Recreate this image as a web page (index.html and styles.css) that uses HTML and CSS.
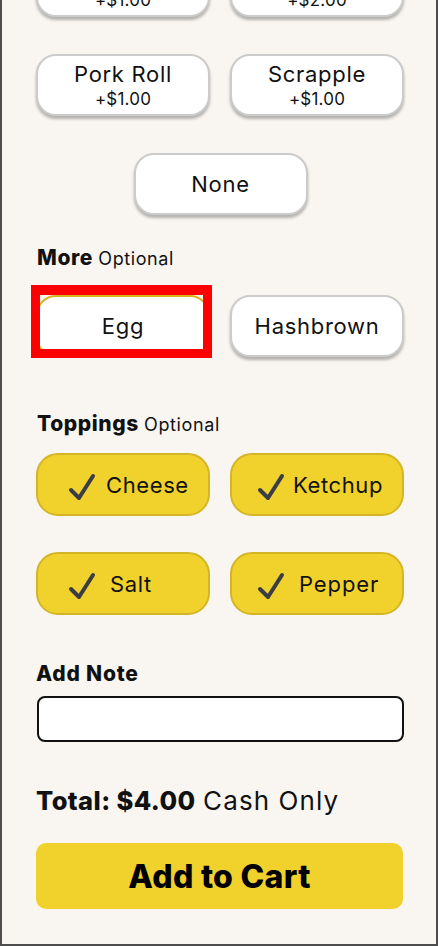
FILE: index.html
```html
<!DOCTYPE html>
<html lang="en">
<head>
<meta charset="utf-8">
<title>Order options</title>
<link rel="stylesheet" href="styles.css">
</head>
<body>
<div class="frame">
  <div class="pair pair--cut">
    <button class="opt"><span class="opt-name">Bacon</span><span class="opt-price">+$1.00</span></button>
    <button class="opt"><span class="opt-name">Sausage</span><span class="opt-price">+$2.00</span></button>
  </div>
  <div class="pair">
    <button class="opt"><span class="opt-name">Pork Roll</span><span class="opt-price">+$1.00</span></button>
    <button class="opt"><span class="opt-name">Scrapple</span><span class="opt-price">+$1.00</span></button>
  </div>
  <div class="single">
    <button class="opt"><span class="opt-name">None</span></button>
  </div>

  <h3 class="heading heading--more">More <span class="heading-opt">Optional</span></h3>
  <div class="pair">
    <div class="marked">
      <button class="opt opt--selected"><span class="opt-name">Egg</span></button>
      <span class="mark"></span>
    </div>
    <button class="opt"><span class="opt-name">Hashbrown</span></button>
  </div>

  <h3 class="heading heading--toppings">Toppings <span class="heading-opt">Optional</span></h3>
  <div class="pair">
    <button class="top"><svg class="check" viewBox="0 0 28 28"><path d="M3 17 L11 25 L25 3"/></svg><span>Cheese</span></button>
    <button class="top top--r"><svg class="check" viewBox="0 0 28 28"><path d="M3 17 L11 25 L25 3"/></svg><span>Ketchup</span></button>
  </div>
  <div class="pair pair--second">
    <button class="top"><svg class="check" viewBox="0 0 28 28"><path d="M3 17 L11 25 L25 3"/></svg><span class="top-wide">Salt</span></button>
    <button class="top top--r"><svg class="check" viewBox="0 0 28 28"><path d="M3 17 L11 25 L25 3"/></svg><span class="top-wide top-wide--r">Pepper</span></button>
  </div>

  <label class="note-label" for="note">Add Note</label>
  <input class="note" id="note" type="text">

  <p class="total"><b>Total: $4.00</b> <span class="total-note">Cash Only</span></p>
  <button class="cart">Add to Cart</button>
</div>
</body>
</html>
```
FILE: styles.css
```css
* { box-sizing: border-box; }
html, body { margin: 0; padding: 0; }
body { background: #f9f6f1; font-family: "Inter", "Liberation Sans", sans-serif; color: #111; }

.frame {
  width: 438px;
  height: 946px;
  overflow: hidden;
  background: #f9f6f1;
  border-left: 2px solid #4d4d4d;
  border-right: 2px solid #4d4d4d;
  border-bottom: 2px solid #4d4d4d;
  padding: 0 32px 0 34px;
}

.pair {
  display: grid;
  grid-template-columns: 174px 174px;
  column-gap: 20px;
  margin-top: 37px;
}
.pair--cut { margin-top: -45px; }
.pair--second { margin-top: 36px; }

.single { display: flex; justify-content: center; margin-top: 37px; padding-left: 1px; }
.single .opt { width: 174px; }

button { font-family: inherit; cursor: pointer; }

.opt {
  height: 62px;
  background: #fff;
  border: 2px solid #cbcbcb;
  border-radius: 20px;
  box-shadow: 0 3px 3px rgba(0, 0, 0, 0.28);
  display: flex;
  flex-direction: column;
  align-items: center;
  justify-content: center;
  padding: 0;
  color: #111;
}
.opt-name { font-size: 22px; line-height: 28px; letter-spacing: 0.7px; }
.opt-price { font-size: 17px; line-height: 23px; letter-spacing: 0.2px; }
.opt--selected { border-color: #d9b41e; box-shadow: none; width: 100%; }

.marked { position: relative; display: flex; }
.mark {
  position: absolute;
  left: -5px;
  top: -10px;
  width: 181px;
  height: 73px;
  border: solid #ff0000;
  border-width: 10px 9px 9px 9px;
  pointer-events: none;
}

.heading { margin: 0; font-size: 21px; line-height: 24px; font-weight: 800; padding-left: 1px; letter-spacing: 0.6px; }
.heading-opt { font-size: 18px; font-weight: 400; letter-spacing: 0.6px; }
.heading--more { margin-top: 31px; }
.heading--more + .pair { margin-top: 24px; }
.heading--toppings { margin-top: 55px; }
.heading--toppings + .pair { margin-top: 16px; }

.top {
  height: 63px;
  background: #f1d12b;
  border: 2px solid #d4b526;
  border-radius: 22px;
  display: flex;
  align-items: center;
  gap: 10px;
  padding: 0 0 0 30px;
  font-size: 22px;
  letter-spacing: 0.6px;
  color: #111;
}
.top--r { padding-left: 25px; gap: 8px; }
.top-wide { margin-left: 4px; }
.top-wide--r { margin-left: 6px; letter-spacing: 0.9px; }
.check { width: 28px; height: 28px; flex: none; margin-top: 4px; }
.check path { fill: none; stroke: #3a3e44; stroke-width: 4; stroke-linecap: round; stroke-linejoin: round; }

.note-label { display: block; margin-top: 47px; font-size: 21px; line-height: 24px; font-weight: 800; letter-spacing: 0.8px; }
.note {
  display: block;
  width: 367px;
  height: 46px;
  margin: 10px 0 0 1px;
  background: #fff;
  border: 2px solid #111;
  border-radius: 8px;
  font: inherit;
}

.total { margin: 44px 0 0; font-size: 25.5px; line-height: 30px; letter-spacing: 0.4px; }
.total b { font-weight: 800; }
.total-note { font-size: 26px; letter-spacing: 1.1px; }

.cart {
  display: block;
  width: 367px;
  height: 66px;
  margin-top: 27px;
  background: #f1d12b;
  border: none;
  border-radius: 10px;
  font-size: 32px;
  font-weight: 800;
  letter-spacing: 0.3px;
  color: #000;
}
```
